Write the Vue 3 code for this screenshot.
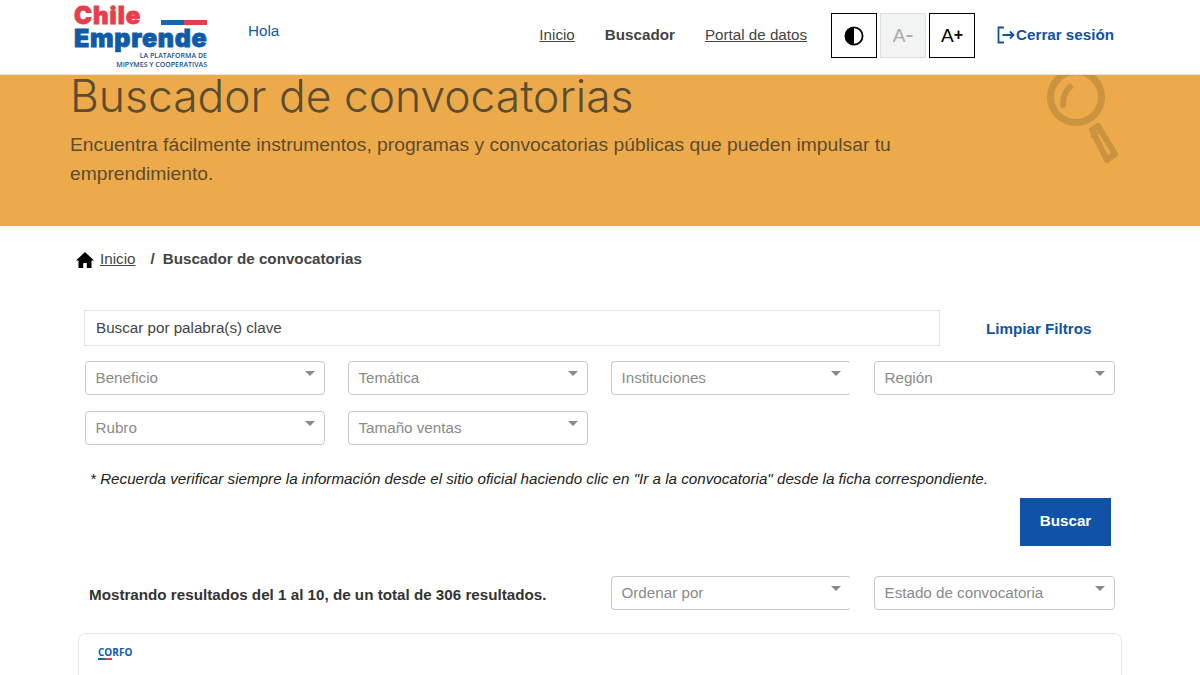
<template>
  <div class="page">
    <header class="topbar">
      <div class="logo">
        <div class="logo-chile">
          <span>Chile</span>
          <i class="flag"></i>
        </div>
        <div class="logo-emprende">Emprende</div>
        <div class="logo-sub">LA PLATAFORMA DE<br />MIPYMES Y COOPERATIVAS</div>
      </div>
      <span class="hola">Hola</span>
      <nav class="nav">
        <a class="nav-link">Inicio</a>
        <a class="nav-link active">Buscador</a>
        <a class="nav-link">Portal de datos</a>
      </nav>
      <div class="tools">
        <button class="tool">
          <svg width="20" height="20" viewBox="0 0 20 20">
            <circle cx="10" cy="10" r="8.6" fill="#fff" stroke="#000" stroke-width="1.8" />
            <path d="M10 1.400a8.600 8.600 0 0 0 0 17.200z" fill="#000" />
          </svg>
        </button>
        <button class="tool off">A<small>-</small></button>
        <button class="tool plus">A<small>+</small></button>
      </div>
      <a class="logout">
        <svg width="18" height="18" viewBox="0 0 18 18" fill="none" stroke="#0f52a5" stroke-width="1.8">
          <path d="M7 1.500H1.500v15H7" />
          <path d="M5.500 9h11M13 5.500 16.500 9 13 12.500" />
        </svg>
        Cerrar sesión
      </a>
    </header>

    <section class="banner">
      <div class="banner-text">
        <h1>Buscador de convocatorias</h1>
        <p>Encuentra fácilmente instrumentos, programas y convocatorias públicas que pueden impulsar tu emprendimiento.</p>
      </div>
      <svg class="lens" width="76" height="92" viewBox="0 0 76 92" fill="none" stroke="#c9933f">
        <circle cx="29" cy="22" r="25.5" stroke-width="7" />
        <path d="M23 12c-5 4-7 10-7 18" stroke-width="6" stroke-linecap="round" />
        <path d="M45 55 51 51 68 79 60 85z" stroke-width="6" stroke-linejoin="round" />
        <path d="M44 62 55 55" stroke-width="3" />
      </svg>
    </section>

    <main class="content">
      <div class="crumbs">
        <svg width="18" height="16" viewBox="0 0 18 16">
          <path d="M9 0 0 8.500h2.500V16h4.700v-5h3.600v5h4.700V8.500H18z" fill="#000" />
        </svg>
        <a>Inicio</a>
        <span class="sep">/</span>
        <b>Buscador de convocatorias</b>
      </div>

      <div class="search-row">
        <div class="search">Buscar por palabra(s) clave</div>
        <a class="clear">Limpiar Filtros</a>
      </div>

      <div class="filters">
        <div v-for="f in filters" :key="f" class="select">{{ f }}</div>
      </div>

      <p class="note">* Recuerda verificar siempre la información desde el sitio oficial haciendo clic en "Ir a la convocatoria" desde la ficha correspondiente.</p>

      <div class="actions">
        <button class="search-btn">Buscar</button>
      </div>

      <div class="results-row">
        <div class="results">Mostrando resultados del 1 al 10, de un total de 306 resultados.</div>
        <div class="select open-right">Ordenar por</div>
        <div class="select">Estado de convocatoria</div>
      </div>

      <article class="card">
        <div class="corfo">
          <span>CORFO</span>
          <i class="flag small"></i>
        </div>
      </article>
    </main>
  </div>
</template>

<script setup>
const filters = ['Beneficio', 'Temática', 'Instituciones', 'Región', 'Rubro', 'Tamaño ventas']
</script>

<style>
html, body {
  margin: 0;
  background: #fff;
  overflow: hidden;
}
</style>

<style scoped>
.page {
  height: 675px;
  overflow: hidden;
  font-family: "Liberation Sans", Arial, sans-serif;
  font-size: 15.200px;
  color: #444;
}
.topbar {
  height: 75px;
  box-sizing: border-box;
  display: flex;
  align-items: center;
  padding: 0 86px 3px 73px;
  border-bottom: 1px solid #e8e4dc;
}
.logo {
  width: 134px;
  margin-top: 2px;
  font-family: Inter, "DejaVu Sans", sans-serif;
  font-weight: 900;
}
.logo-chile {
  display: flex;
  justify-content: space-between;
  align-items: flex-end;
  height: 22px;
  padding-left: 1px;
  font-size: 24px;
  line-height: 22px;
  color: #e63e4d;
  letter-spacing: 1px;
  -webkit-text-stroke: 0.8px #e63e4d;
}
.logo-chile span {
  position: relative;
  top: 1px;
}
.flag {
  display: block;
  width: 46px;
  height: 5px;
  margin-bottom: 1px;
  background: linear-gradient(90deg, #1565b0 50%, #e63e4d 50%);
}
.logo-emprende {
  padding-left: 1px;
  font-size: 25px;
  line-height: 25px;
  color: #0f5ba8;
  letter-spacing: 0.7px;
  white-space: nowrap;
  -webkit-text-stroke: 0.8px #0f5ba8;
}
.logo-sub {
  font-family: "Open Sans", sans-serif;
  font-size: 7px;
  line-height: 9px;
  font-weight: 600;
  text-align: right;
  color: #17508f;
  white-space: nowrap;
}
.hola {
  margin: -10px 0 0 41px;
  color: #0f5ba8;
}
.nav {
  display: flex;
  gap: 30px;
  margin: -2px 0 0 auto;
}
.nav-link {
  text-decoration: underline;
}
.nav-link.active {
  text-decoration: none;
  font-weight: 700;
}
.tools {
  display: flex;
  gap: 3px;
  margin-left: 24px;
}
.tool {
  width: 46px;
  height: 45px;
  padding: 0;
  box-sizing: border-box;
  display: flex;
  align-items: center;
  justify-content: center;
  border: 1px solid #000;
  background: #fff;
  color: #000;
  font-family: inherit;
  font-size: 19px;
}
.tool small {
  font-size: 16px;
  font-weight: 700;
  position: relative;
  top: -1px;
}
.tool.off {
  border: 1px solid #ddd;
  background: #f2f3f3;
  color: #aaa;
}
.tool.off small {
  font-size: 24px;
  font-weight: 400;
  top: -2px;
}
.logout {
  display: flex;
  align-items: center;
  gap: 1px;
  margin: -2px 0 0 22px;
  font-weight: 700;
  color: #0f52a5;
  white-space: nowrap;
}
.banner {
  height: 151px;
  box-sizing: border-box;
  position: relative;
  background: #edaa4b;
  padding: 0 70px;
}
.banner-text {
  width: 850px;
  color: #5c4c30;
}
.banner h1 {
  margin: 0;
  font-family: Inter, "Liberation Sans", sans-serif;
  font-size: 44.400px;
  line-height: 42px;
  font-weight: 300;
}
.banner p {
  margin: 13px 0 0;
  font-size: 19.250px;
  line-height: 29px;
}
.lens {
  position: absolute;
  left: 1047px;
  top: 0;
}
.content {
  padding: 22px 85px 0;
}
.crumbs {
  display: flex;
  align-items: center;
  height: 20px;
  margin-left: -9px;
}
.crumbs svg {
  margin-top: 3px;
}
.crumbs a {
  margin-left: 6px;
  text-decoration: underline;
}
.crumbs .sep {
  margin: 0 8px 0 15px;
  font-weight: 700;
}
.search-row {
  display: flex;
  align-items: center;
  margin: 42px 0 0 -1px;
}
.search {
  width: 856px;
  height: 36px;
  box-sizing: border-box;
  padding-left: 11px;
  line-height: 34px;
  border: 1px solid #e2e2e2;
}
.clear {
  margin-left: 46px;
  font-weight: 700;
  color: #0f52a5;
  white-space: nowrap;
}
.filters {
  display: grid;
  grid-template-columns: 240px 240px 240px 241px;
  gap: 16px 23px;
  margin-top: 15px;
}
.select {
  height: 34px;
  box-sizing: border-box;
  position: relative;
  padding-left: 9.500px;
  line-height: 31px;
  border: 1px solid #c8c8c8;
  border-radius: 4px;
  color: #8a8a8a;
}
.select::after {
  content: "";
  position: absolute;
  right: 9px;
  top: 9px;
  border-left: 5px solid transparent;
  border-right: 5px solid transparent;
  border-top: 5px solid #8a8a8a;
}
.filters .select:nth-child(3),
.select.open-right {
  border-right-color: transparent;
}
.note {
  margin: 25px 0 0 5px;
  line-height: 17px;
  font-style: italic;
  color: #222;
  white-space: nowrap;
}
.actions {
  display: flex;
  justify-content: flex-end;
  margin: 11px 4px 0 0;
}
.search-btn {
  width: 91px;
  height: 48px;
  padding: 0 0 3px;
  border: 0;
  background: #0f52a8;
  color: #fff;
  font-family: inherit;
  font-size: 15.200px;
  font-weight: 700;
}
.results-row {
  display: grid;
  grid-template-columns: 499px 240px 241px;
  column-gap: 23px;
  align-items: center;
  margin: 30px 0 0 4px;
}
.results {
  font-weight: 700;
  color: #333;
  white-space: nowrap;
  margin-top: 2px;
}
.card {
  width: 1044px;
  height: 80px;
  box-sizing: border-box;
  margin: 23px 0 0 -7px;
  padding: 13px 19px;
  border: 1px solid #e6e6e6;
  border-radius: 8px;
}
.corfo {
  width: 34px;
  font-family: "Open Sans", sans-serif;
  font-size: 10px;
  line-height: 11px;
  font-weight: 700;
  color: #0f5ba8;
}
.flag.small {
  width: 14px;
  height: 1.500px;
  margin-bottom: 0;
}
</style>
